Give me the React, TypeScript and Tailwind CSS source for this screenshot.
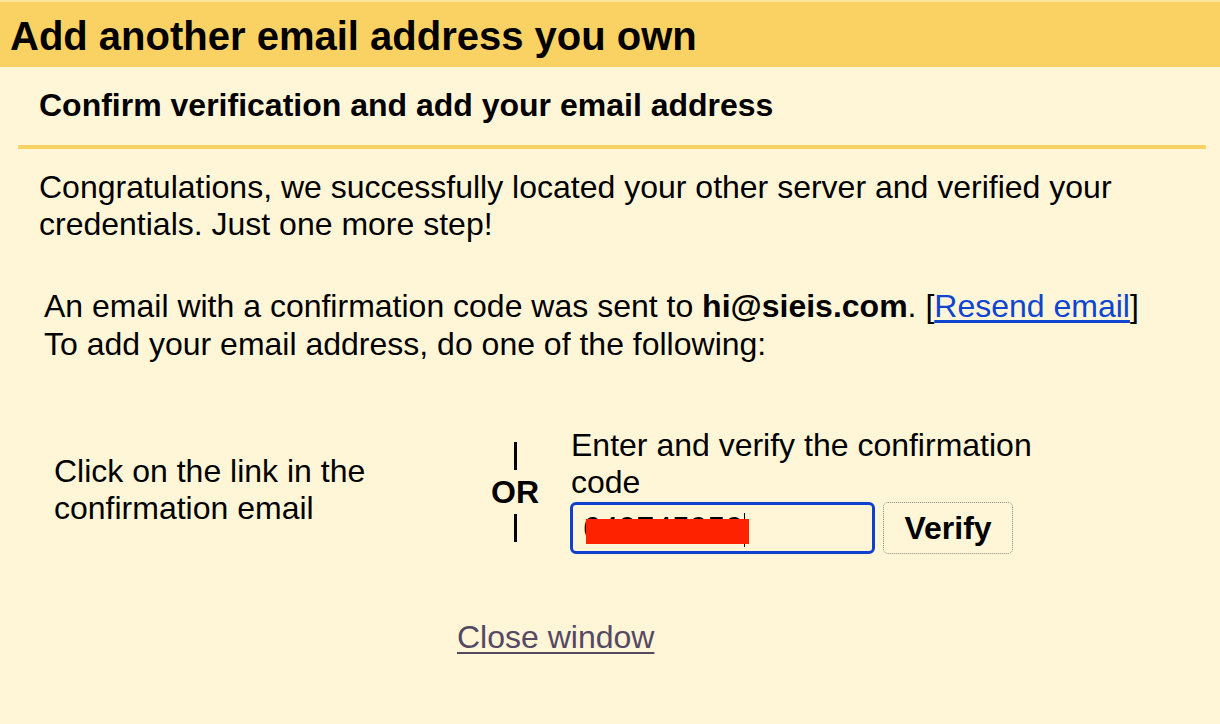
import React from "react";

export default function App() {
  return (
    <div
      className="w-[1220px] h-[724px] bg-[#fff6d8] text-black overflow-hidden"
      style={{ fontFamily: '"Liberation Sans", Arial, sans-serif' }}
    >
      <div className="h-[67px] bg-[#f9d263] border-t-2 border-[#fde59a] flex items-center pl-[10px]">
        <h1 className="text-[40px] font-bold leading-none pt-[2px]">Add another email address you own</h1>
      </div>
      <div className="pl-[18px] pr-[14px]">
        <div className="pl-[21px] pt-[22px] pb-[24px]">
          <h2 className="text-[32px] font-bold leading-[32px]">Confirm verification and add your email address</h2>
        </div>
        <div className="h-[4px] bg-[#f9d263]" />
      </div>
      <div className="pl-[39px] pt-[20px] text-[32px] leading-[37px]">
        <p>
          Congratulations, we successfully located your other server and verified your
          <br />
          credentials. Just one more step!
        </p>
        <div className="pl-[5px] pt-[44px] leading-[38px]">
          An email with a confirmation code was sent to <b>hi@sieis.com</b>. [
          <a className="text-[#0d44d0] underline underline-offset-[3px]" href="#">Resend email</a>]
          <br />
          To add your email address, do one of the following:
        </div>
        <div className="flex pt-[64px]">
          <div className="w-[437px] pl-[15px] pt-[26px] leading-[37px]">
            Click on the link in the
            <br />
            confirmation email
          </div>
          <div className="w-[78px] flex flex-col items-center pt-[15px]">
            <div className="w-[3px] h-[28px] bg-black" />
            <div className="font-bold leading-[36px] py-[4px]">OR</div>
            <div className="w-[3px] h-[28px] bg-black" />
          </div>
          <div className="pl-[16px]">
            <div className="leading-[37px] pl-[1px]">
              Enter and verify the confirmation
              <br />
              code
            </div>
            <div className="flex gap-[8px] mt-[1px]">
              <div className="relative w-[305px] h-[52px] border-[3px] border-[#0f40cf] rounded-[6px] flex items-center pl-[10px]">
                <span className="leading-none">649745959</span>
                <div className="w-[1px] h-[34px] bg-black ml-[1px] mt-[4px]" />
                <div className="absolute left-[13px] top-[14px] w-[163px] h-[25px] bg-[#ff2200]" />
              </div>
              <button className="w-[130px] h-[52px] border border-dotted border-[#888] rounded-[5px] font-bold text-[32px] leading-none">
                Verify
              </button>
            </div>
          </div>
        </div>
        <div className="pl-[418px] pt-[65px]">
          <a className="text-[#564863] underline underline-offset-[4px] decoration-2" href="#">Close window</a>
        </div>
      </div>
    </div>
  );
}
